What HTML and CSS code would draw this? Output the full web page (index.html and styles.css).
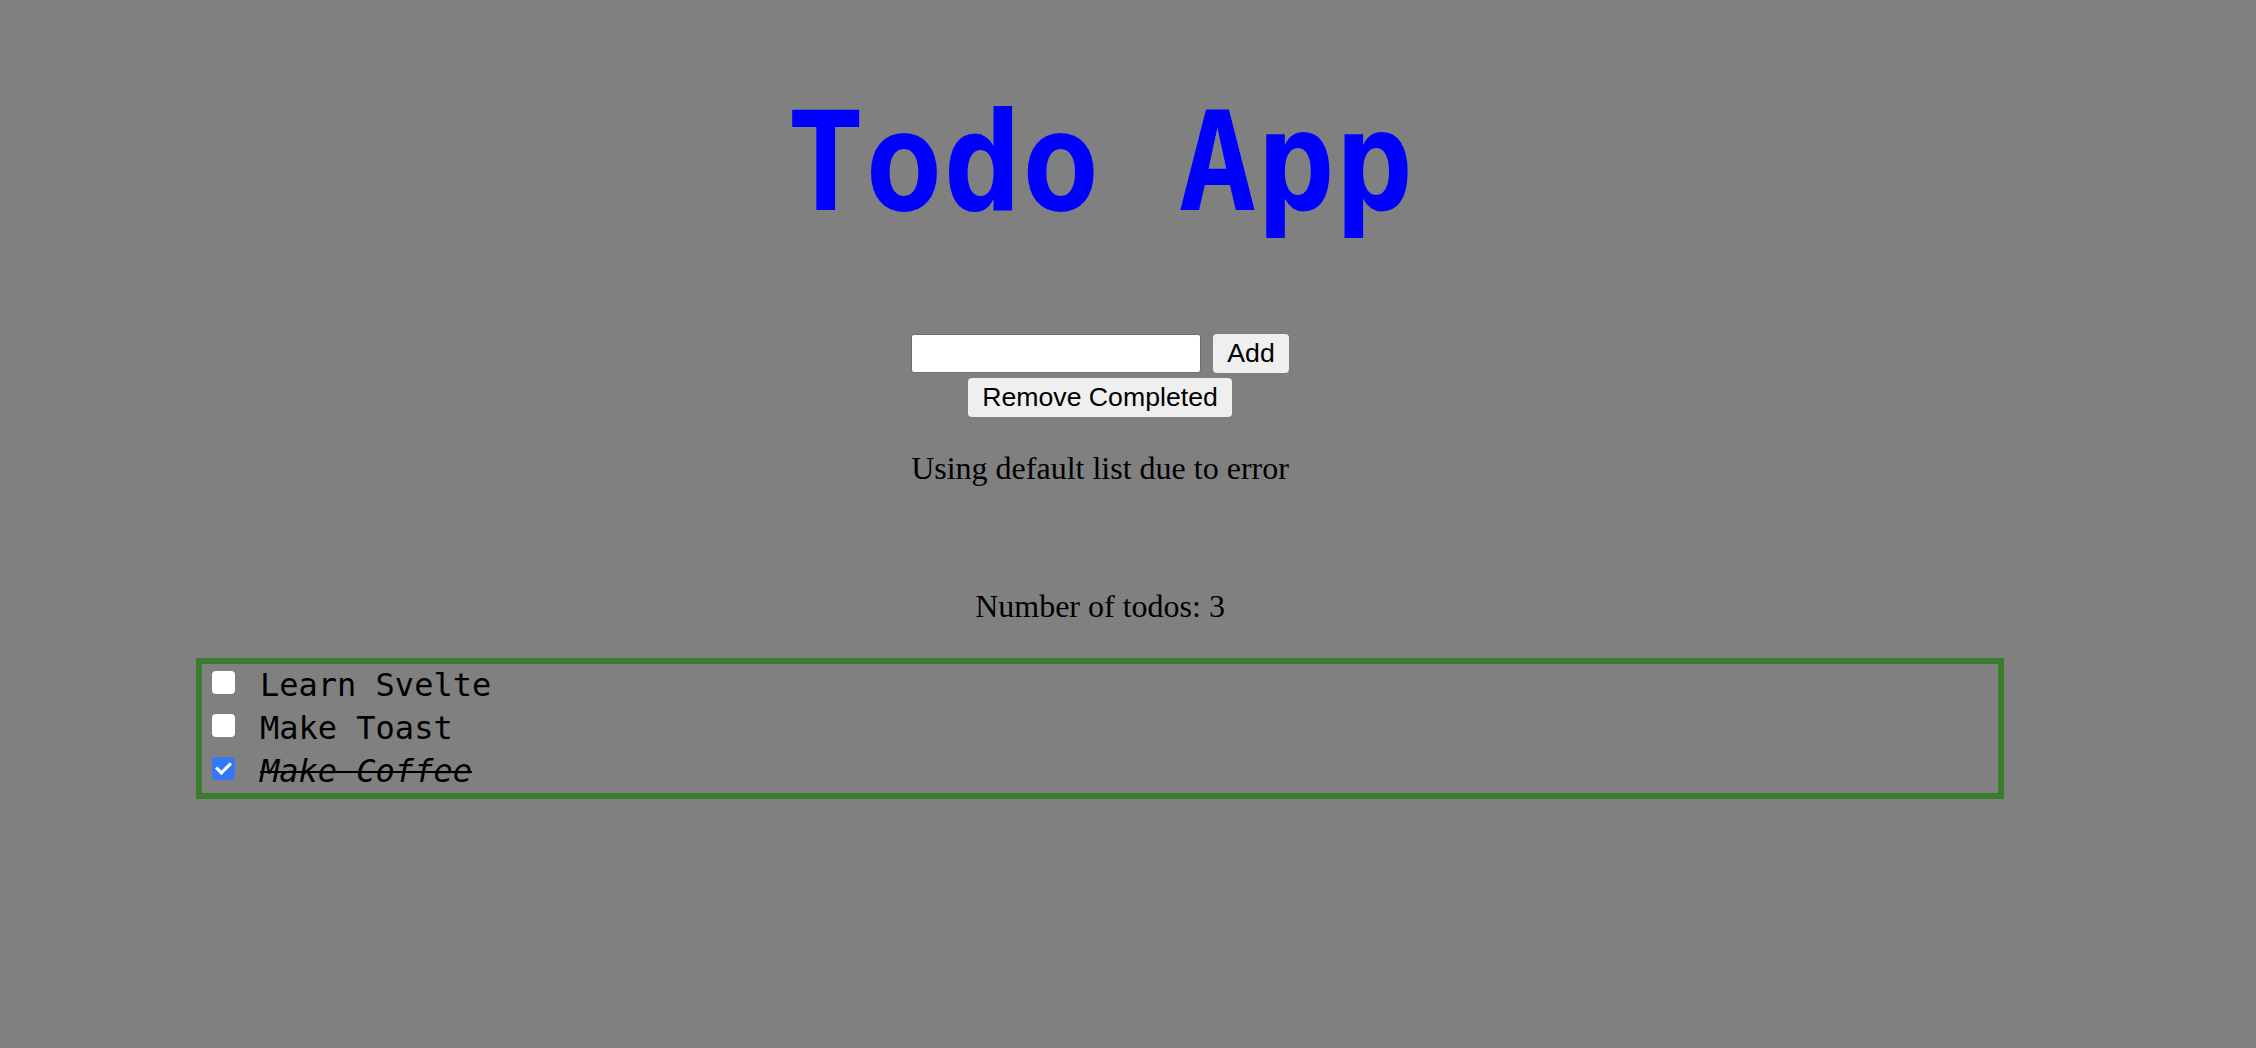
FILE: index.html
```html
<!DOCTYPE html>
<html lang="en">
<head>
<meta charset="utf-8">
<title>Todo App</title>
<link rel="stylesheet" href="styles.css">
</head>
<body>
<div class="app">
  <h1 class="title"><span class="title-text">Todo App</span></h1>
  <div class="add-row">
    <input class="todo-input" type="text">
    <button class="btn">Add</button>
  </div>
  <button class="btn btn-remove">Remove Completed</button>
  <p class="status">Using default list due to error</p>
  <p class="count">Number of todos: 3</p>
  <ul class="todo-list">
    <li class="todo"><input type="checkbox" class="check"><span class="label">Learn Svelte</span></li>
    <li class="todo"><input type="checkbox" class="check"><span class="label">Make Toast</span></li>
    <li class="todo done"><input type="checkbox" class="check" checked><span class="label">Make Coffee</span></li>
  </ul>
</div>
</body>
</html>
```
FILE: styles.css
```css
body {
  margin: 0;
  background: #808080;
}

.app {
  width: 2200px;
  display: flex;
  flex-direction: column;
  align-items: center;
}

.title {
  margin: 94px 0 0;
  font-family: "DejaVu Sans Mono", monospace;
  font-weight: 700;
  font-size: 137px;
  line-height: 137px;
  color: #0000ff;
  white-space: pre;
}

.title-text {
  display: inline-block;
  transform: scaleX(0.95);
}

.add-row {
  display: flex;
  align-items: center;
  gap: 12px;
  margin-top: 103px;
}

.todo-input {
  width: 290px;
  height: 39px;
  box-sizing: border-box;
  margin: 0;
  padding: 0 6px;
  border: 1px solid #6e6e6e;
  border-radius: 3px;
  background: #ffffff;
  font-family: "Liberation Sans", Arial, sans-serif;
  font-size: 26px;
}

.btn {
  height: 39px;
  box-sizing: border-box;
  margin: 0;
  padding: 0 14.5px;
  border: none;
  border-radius: 4px;
  background: #efefef;
  color: #000000;
  font-family: "Liberation Sans", Arial, sans-serif;
  font-size: 26.67px;
}

.btn-remove {
  margin-top: 5px;
}

.status,
.count {
  margin: 0;
  font-family: "Liberation Serif", "Times New Roman", serif;
  font-size: 32px;
  line-height: 32px;
  color: #000000;
}

.status {
  margin-top: 35px;
}

.count {
  margin-top: 106px;
}

.todo-list {
  list-style: none;
  margin: 36px 0 0;
  padding: 0;
  width: 1808px;
  box-sizing: border-box;
  border: 6px solid #3a7d2c;
}

.todo {
  display: flex;
  align-items: flex-start;
  height: 43px;
  font-family: "DejaVu Sans Mono", monospace;
  font-size: 32px;
  line-height: 42px;
  color: #000000;
}

.check {
  appearance: none;
  -webkit-appearance: none;
  position: relative;
  flex: none;
  width: 23px;
  height: 23px;
  margin: 7px 25px 0 10px;
  border-radius: 4px;
  background: #ffffff;
}

.check:checked {
  background: #3478f6;
}

.check:checked::after {
  content: "";
  position: absolute;
  left: 7px;
  top: 2px;
  width: 6px;
  height: 12px;
  border: solid #ffffff;
  border-width: 0 3.5px 3.5px 0;
  transform: rotate(45deg);
}

.done .label {
  font-style: italic;
  text-decoration: line-through;
  text-decoration-thickness: 2px;
}
```
